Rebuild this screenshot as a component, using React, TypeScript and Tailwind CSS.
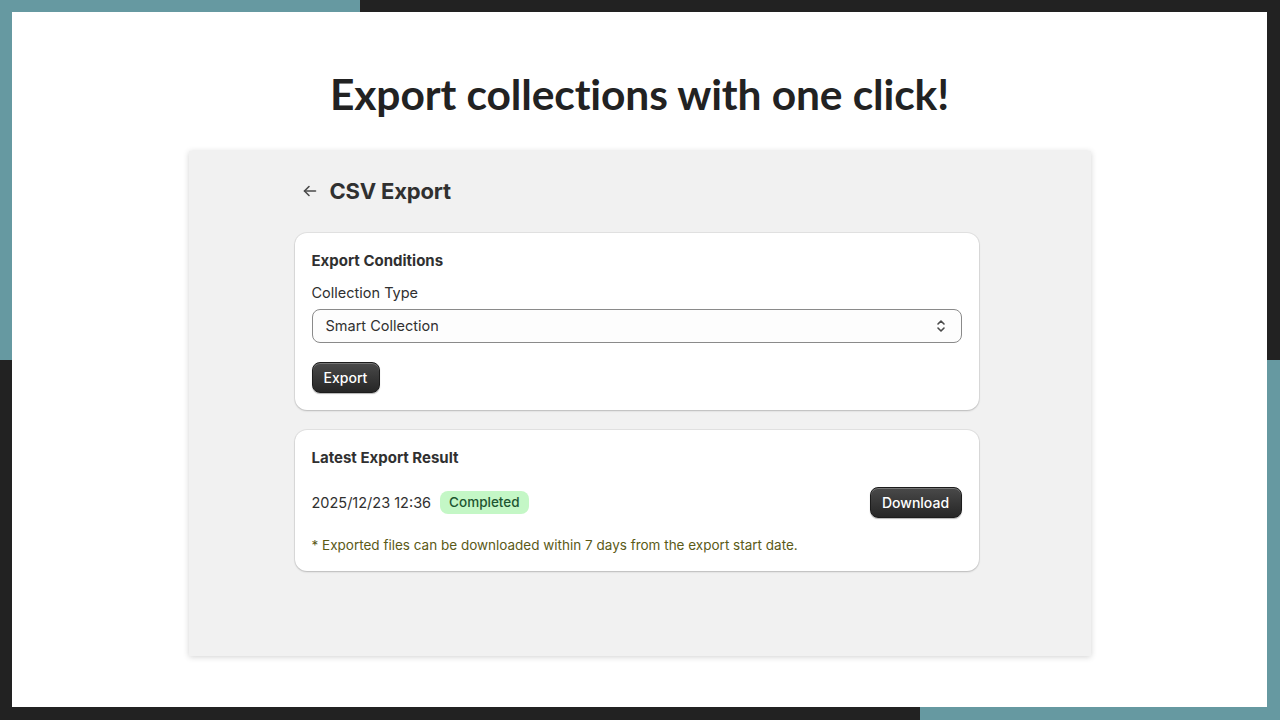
import React from 'react';

const Chevrons: React.FC = () => (
  <svg width="12" height="16" viewBox="0 0 12 16" fill="none" stroke="#4a4a4a" strokeWidth={1.6} strokeLinecap="round" strokeLinejoin="round">
    <path d="M3 6l3-3 3 3" />
    <path d="M3 10l3 3 3-3" />
  </svg>
);

const DarkButton: React.FC<{ label: string; className?: string }> = ({ label, className = '' }) => (
  <button
    className={`h-[31px] rounded-lg border border-[#1c1c1c] bg-gradient-to-b from-[#4a4a4a] to-[#262626] text-[14px] font-medium text-white shadow-[inset_0_1px_0_rgba(255,255,255,0.25),0_1px_1px_rgba(0,0,0,0.3)] ${className}`}
  >
    {label}
  </button>
);

const App: React.FC = () => {
  return (
    <div className="relative h-[720px] w-[1280px] overflow-hidden bg-[#222222]">
      {/* decorative quadrants behind the panel */}
      <div className="absolute inset-0 grid grid-cols-[360px_560px_360px] grid-rows-2">
        <div className="bg-[#6699a1]" />
        <div className="bg-[#222222]" />
        <div className="bg-[#222222]" />
        <div className="bg-[#222222]" />
        <div className="bg-[#222222]" />
        <div className="bg-[#6699a1]" />
      </div>

      <div className="relative m-[12px] flex h-[695px] w-[1255px] flex-col items-center bg-white pt-[52px]">
        <h1
          className="h-[60px] text-[42.5px] font-bold leading-[60px] text-[#222222] [font-variant-ligatures:none] tracking-[-0.1px]"
          style={{ fontFamily: '"Source Sans Pro", Lato, "Noto Sans", sans-serif' }}
        >
          Export collections with one click!
        </h1>

        <div
          className="mt-[27px] flex h-[505px] w-[902px] flex-col bg-[#f1f1f1] pl-[106px] pt-[24px] shadow-[0_1px_6px_rgba(0,0,0,0.18)]"
          style={{ fontFamily: 'Inter, "Noto Sans", sans-serif' }}
        >
          <div className="flex h-[32px] items-center gap-[12px] pl-[7px]">
            <svg width="16" height="16" viewBox="0 0 16 16" fill="none" stroke="#4a4a4a" strokeWidth={1.6} strokeLinecap="round" strokeLinejoin="round">
              <path d="M13.5 8H2.5" />
              <path d="M7 3.5L2.5 8 7 12.5" />
            </svg>
            <span className="text-[22px] font-bold tracking-[-0.2px] text-[#303030]">CSV Export</span>
          </div>

          <div className="mt-[26px] flex w-[684px] flex-col rounded-xl bg-white px-[17px] pb-[17px] pt-[18px] shadow-[0_0_0_1px_rgba(0,0,0,0.06),0_1px_2px_rgba(0,0,0,0.18)]">
            <div className="text-[15px] font-bold leading-[20px] text-[#303030]">Export Conditions</div>
            <div className="mt-[12px] text-[14.5px] leading-[20px] text-[#303030]">Collection Type</div>
            <div className="mt-[6px] flex h-[34px] items-center justify-between rounded-lg border border-[#8a8a8a] bg-[#fdfdfd] pl-[13px] pr-[14px]">
              <span className="text-[14.5px] text-[#303030]">Smart Collection</span>
              <Chevrons />
            </div>
            <div className="mt-[19px]">
              <DarkButton label="Export" className="w-[68px]" />
            </div>
          </div>

          <div className="mt-[20px] flex w-[684px] flex-col rounded-xl bg-white px-[17px] pb-[16px] pt-[18px] shadow-[0_0_0_1px_rgba(0,0,0,0.06),0_1px_2px_rgba(0,0,0,0.18)]">
            <div className="text-[15px] font-bold leading-[20px] text-[#303030]">Latest Export Result</div>
            <div className="mt-[19px] flex h-[31px] items-center justify-between">
              <div className="flex items-center gap-[9px]">
                <span className="text-[14.5px] text-[#303030]">2025/12/23 12:36</span>
                <span className="flex h-[23px] items-center rounded-lg bg-[#c4f7c6] px-[9px] text-[13.5px] font-medium text-[#1e5631]">
                  Completed
                </span>
              </div>
              <DarkButton label="Download" className="w-[92px]" />
            </div>
            <div className="mt-[17px] text-[13.5px] leading-[20px] text-[#5b5a17]">
              * Exported files can be downloaded within 7 days from the export start date.
            </div>
          </div>
        </div>
      </div>
    </div>
  );
};

export default App;
